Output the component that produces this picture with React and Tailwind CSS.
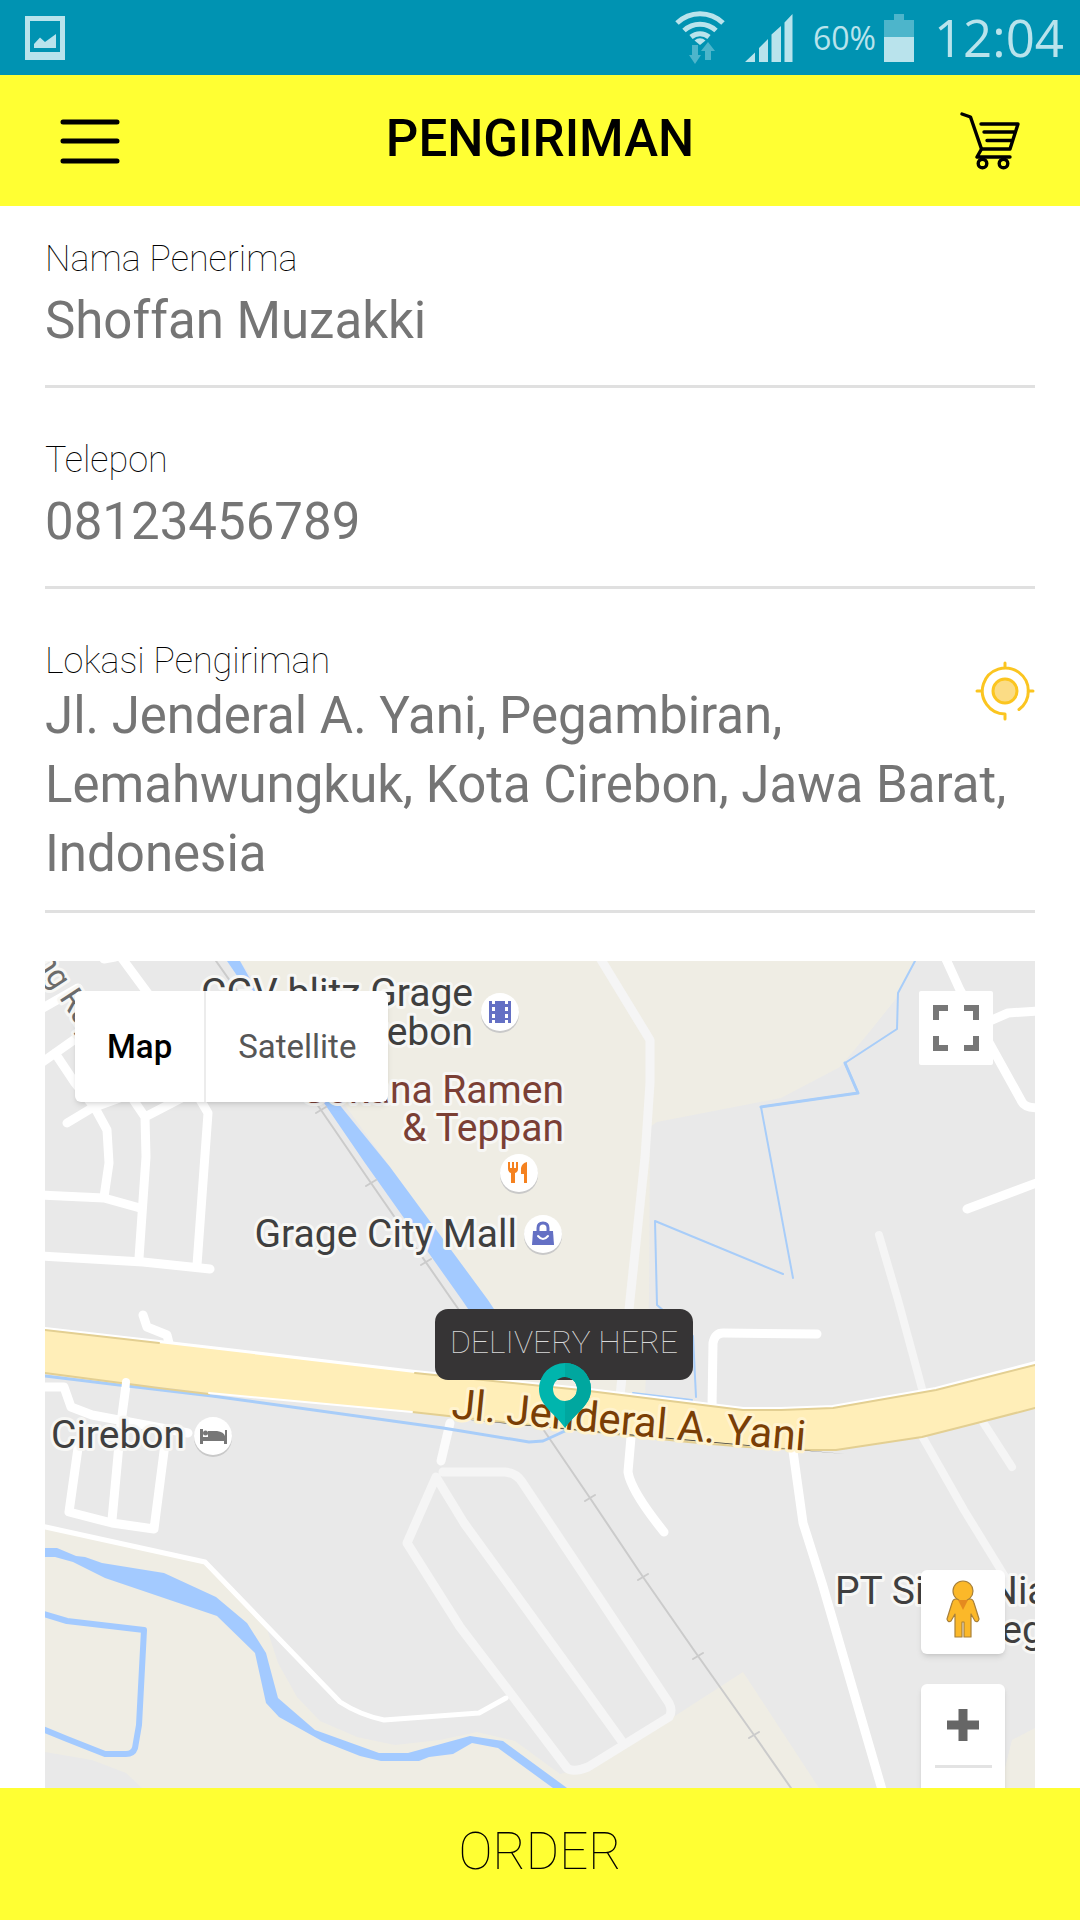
import { useState } from 'react';

const ADDRESS = 'Jl. Jenderal A. Yani, Pegambiran, Lemahwungkuk, Kota Cirebon, Jawa Barat, Indonesia';

// railway sleepers along the track
const TICKS = [[276, 149], [326, 222], [381, 301], [545, 537], [598, 616], [653, 695], [709, 774]];

function StatusBar() {
    return (
        <div className="flex h-[75px] shrink-0 items-center justify-between bg-[#0093b2] pl-[25px] pr-4 text-[#b9e3ec]">
            <svg width="40" height="44" viewBox="0 0 40 44" fill="currentColor">
                <path fillRule="evenodd" d="M0 0H40V44H0ZM5 5V36H35V5Z"/>
                <path d="M9 32V28L15 21.5L20 26L31 18V32Z"/>
            </svg>
            <div className="flex items-center gap-5">
                <svg width="50" height="54" viewBox="0 0 50 54" fill="none" stroke="currentColor" strokeWidth="5">
                    <path d="M2 12A33 33 0 0 1 48 12"/>
                    <path d="M9 19.5A23.5 23.5 0 0 1 41 19.5"/>
                    <path d="M16 26A14 14 0 0 1 34 26"/>
                    <path d="M25 34L19.5 29.5A8 8 0 0 1 30.5 29.5Z" fill="currentColor" stroke="none"/>
                    <path d="M17 34H23V44H26L20 53L14 44H17ZM33 31L40 40H36V49H30V40H26Z" fill="#4db5cb" stroke="none"/>
                </svg>
                <svg width="48" height="48" viewBox="0 0 48 48" fill="currentColor">
                    <path d="M0 48L10 38.5V48ZM14 48V34L23 25V48ZM26.5 48V20.5L36 12V48ZM39.5 48V8.5L47.5 0V48Z"/>
                </svg>
                <div className="flex items-center gap-2">
                    <span className="text-[32px] leading-10">60%</span>
                    <svg width="30" height="48" viewBox="0 0 30 48">
                        <path d="M10 0H20V6H30V23H0V6H10Z" fill="#4db5cb"/>
                        <path d="M0 23H30V48H0Z" fill="currentColor"/>
                    </svg>
                </div>
                <span className="text-[51px] leading-none">12:04</span>
            </div>
        </div>
    );
}

function Header() {
    return (
        <header className="flex h-[131px] shrink-0 items-center justify-between bg-[#ffff33] px-[60px]">
            <button aria-label="Menu">
                <svg width="60" height="60" viewBox="0 0 60 60" stroke="black" strokeWidth="5" strokeLinecap="round">
                    <path d="M3 11H57M3 30H57M3 50H57"/>
                </svg>
            </button>
            <h1 className="pb-1 text-[51px] font-medium leading-[69px] text-black">PENGIRIMAN</h1>
            <button aria-label="Keranjang">
                <svg width="60" height="58" viewBox="0 0 60 58" fill="none" stroke="black" strokeWidth="3.4" strokeLinecap="round" strokeLinejoin="round">
                    <path d="M2 2L10.5 5L21.5 37L17 45H50"/>
                    <path d="M21 12H58L50 37H21.5M24 20H55M27 28.5H52"/>
                    <circle cx="22.5" cy="51.5" r="4.3"/>
                    <circle cx="43.5" cy="51.5" r="4.3"/>
                </svg>
            </button>
        </header>
    );
}

function Field({ id, label, type, value, onChange }) {
    return (
        <div className="flex flex-col border-b-[3px] border-[#e0e0e0] pb-[30px]">
            <label htmlFor={id} className="text-4xl font-thin leading-10 text-black">{label}</label>
            <input id={id} type={type} value={value} onChange={e => onChange(e.target.value)}
                className="mt-[6px] h-[70px] w-full bg-transparent text-[51px] leading-[69px] text-[#757575] outline-none"/>
        </div>
    );
}

function MapCanvas() {
    return (
        <svg className="block h-full w-full" viewBox="0 0 990 827" preserveAspectRatio="xMidYMin slice" fill="none" strokeLinecap="round" strokeLinejoin="round">
            <rect width="990" height="827" fill="#e9e9e9"/>

            {/* land */}
            <g fill="#efede4">
                <path d="M195 0H870L850 39L826 69L795 106L736 137L612 161L605 166L604 339L600 437L470 420L345 206Z"/>
                <path d="M0 566L160 601L222 668L233 702L252 736L275 760L312 776L350 784L395 779L432 771L470 780L515 813L557 802L698 711L774 827H97L81 812L47 799L0 791Z"/>
                <path d="M990 767L967 779L955 827H990Z"/>
            </g>

            {/* water */}
            <g fill="#a3caff">
                <path d="M182 0H195L204 16L293 142L345 206L443 339L480 395H455L417 339L320 202Z"/>
                <path d="M0 587H12L31 595L40 596L57 602L119 612L171 636L202 662L221 692L233 737L270 769L334 792H363L425 775L458 780L522 827H508L453 787L427 782L408 793L384 796L374 800H336L315 795L277 780L234 756L221 742L210 692L172 655L60 617L28 601L10 596H0Z"/>
            </g>
            <path d="M-5 652L22 660L99 669L94 764L90 787Q88 793 81 793H60L22 778L-5 767" stroke="#a3caff" strokeWidth="6"/>
            <g stroke="#a8cdf9" strokeWidth="2">
                <path d="M870 0L853 32L852 68L800 102L813 132L716 146L748 317M738 313L610 260L612 344L648 375L651 436M647 439L588 432"/>
                <path d="M800 102L813 132L716 146" strokeWidth="3"/>
            </g>

            {/* footpaths */}
            <g stroke="#f5f5f5" strokeWidth="9">
                <path d="M555 -3L605 79V122L600 196L585 339L575 435"/>
                <path d="M834 274L853 339L879 435M877 475L919 549L970 632M936 458L967 506" strokeWidth="8"/>
                <path d="M398 511H460Q471 512 477 521L509 569L624 742Q628 750 624 756L543 806Q528 812 522 807L463 729L415 666L362 582L391 516L419 562L535 722L576 779"/>
            </g>

            {/* railway */}
            <path d="M171 0L276 149L326 222L407 339L498 468L545 537L598 616L653 695L709 774L746 827" stroke="#cbcbcb" strokeWidth="2"/>
            {TICKS.map(([x, y]) => <path key={x} d={`M${x - 5} ${y + 3}L${x + 5} ${y - 3}`} stroke="#cbcbcb" strokeWidth="2"/>)}

            {/* streets */}
            <g stroke="white" strokeWidth="9">
                <path d="M76 -4L104 34M59 -2L70 -4M-4 48L33 27M-4 102L33 76M10 92L30 122L50 147L62 169L64 202L59 236M22 162L47 147L80 135M81 128L100 156L101 196L94 297M100 156L150 130L163 152L152 304"/>
                <path d="M-4 234L59 237L95 247M-4 295L98 301L165 308"/>
                <path d="M98 354L102 366L122 374L125 386M-4 426H19L26 446L47 454L143 472M81 424L76 462L67 559M34 480L24 551L67 562L109 568L121 475"/>
                <path d="M900 -4L915 29L977 141Q980 147 994 147M940 62L963 52L994 50M922 248L994 221"/>
                <path d="M586 476L583 511Q586 530 619 571M667 446L668 382Q670 372 678 372L772 373M748 490L758 562L777 622L838 832"/>
                <path d="M405 462L396 500" stroke="#fbfbfb"/>
                <path d="M-4 565L160 601L295 741Q315 754 339 759L434 752L461 737" strokeWidth="5"/>
            </g>

            {/* main road */}
            <path d="M0 415L74 424L167 435L398 467L484 481L498 480L520 470" stroke="#a8cdf9" strokeWidth="3"/>
            <path d="M0 369L114 382L370 412L536 429L698 449H736L788 447L891 429L994 402" stroke="white" strokeWidth="6"/>
            <path d="M0 369L114 382L370 412L536 429L698 449H736L788 447L891 429L990 404V447L932 462L877 476L791 489H764L702 486L643 481L405 456L367 451L164 432L0 412Z" fill="#ffeeb8"/>
            <g stroke="#e3cf92" strokeWidth="2">
                <path d="M0 369L114 382M370 412L536 429L698 449H736L788 447L891 429L990 404"/>
                <path d="M0 412L114 427L164 433M367 451L643 481L702 486L764 489H791L877 476L932 462L990 447"/>
            </g>
            <path d="M164 432L367 451" stroke="white" strokeWidth="2"/>
            <path d="M81 421L80 432" stroke="white" strokeWidth="8"/>

            {/* labels */}
            <g className="text-[39px]" fill="#3f3f3f" stroke="#f7f7f5" strokeWidth="6" style={{ paintOrder: 'stroke' }}>
                <text x="428" y="45" textAnchor="end">CGV blitz Grage</text>
                <text x="428" y="84" textAnchor="end">Cirebon</text>
                <text x="519" y="142" textAnchor="end" fill="#7b3f35">Gokana Ramen</text>
                <text x="519" y="180" textAnchor="end" fill="#7b3f35">&amp; Teppan</text>
                <text x="472" y="286" textAnchor="end">Grage City Mall</text>
                <text x="6" y="487">Cirebon</text>
                <text x="790" y="643">PT Sinar Niaga</text>
                <text x="932" y="682">Pegambiran</text>
                <text className="text-[32px]" fill="#6b6b6b" transform="translate(-10 0) rotate(57)">ng Raya</text>
                <path id="jalan" d="M406 457Q560 473 800 493" stroke="none"/>
                <text className="text-[42px]" fill="#7a3e05" stroke="#fff3cf"><textPath href="#jalan">Jl. Jenderal A. Yani</textPath></text>
            </g>

            {/* places */}
            <g fill="#c9c9c9">
                <circle cx="455" cy="53" r="19"/><circle cx="474" cy="214" r="19"/>
                <circle cx="498" cy="275" r="19"/><circle cx="168" cy="477" r="19"/>
            </g>
            <g fill="white">
                <circle cx="455" cy="51" r="19"/><circle cx="474" cy="212" r="19"/>
                <circle cx="498" cy="273" r="19"/><circle cx="168" cy="475" r="19"/>
            </g>
            <path fill="#6470c4" fillRule="evenodd" d="M444 40H447V43H450V40H460V43H463V40H466V62H463V59H460V62H450V59H447V62H444ZM447 46V50H450V46ZM447 53V57H450V53ZM460 46V50H463V46ZM460 53V57H463V53Z"/>
            <path fill="#f58220" d="M463 201H465V207H467V201H469V207H471V201H473V208Q473 211 470 212V222H466V212Q463 211 463 208ZM482 201V222H479V213H476V207Q477 202 482 201Z"/>
            <path fill="#6470c4" d="M488 270H508L509 284H487Z"/>
            <path d="M493 270V267Q493 262 498 262T503 267V270" stroke="#6470c4" strokeWidth="3"/>
            <path d="M493 275Q498 281 503 275" stroke="white" strokeWidth="2"/>
            <path fill="#777" d="M155 468H158V476H163V470H172Q179 471 180 475V469H182V483H179V480H158V483H155Z"/>
            <circle cx="160.5" cy="472" r="2.5" fill="#777"/>

            {/* delivery marker */}
            <rect x="390" y="348" width="258" height="71" rx="13" fill="#363435"/>
            <text x="519" y="392" textAnchor="middle" className="text-[32px] font-thin" fill="#d8d8d8">DELIVERY HERE</text>
            <path fillRule="evenodd" fill="#00b5ad" d="M520 402A26 26 0 0 1 546 428C546 445 530 452 520 467C510 452 494 445 494 428A26 26 0 0 1 520 402ZM520 416A12 12 0 1 0 520 440A12 12 0 1 0 520 416Z"/>
            <path fill="#00a79f" d="M520 402A26 26 0 0 1 546 428C546 445 530 452 520 467V440A12 12 0 0 0 520 416Z"/>
        </svg>
    );
}

function DeliveryMap() {
    const [mode, setMode] = useState('map');

    return (
        <section aria-label="Peta" className="relative mt-12 min-h-0 flex-1 overflow-hidden bg-[#e9e9e9]">
            <MapCanvas/>
            <div className="absolute left-[30px] top-[30px] flex h-[111px] rounded-md bg-white text-[33px] leading-10 shadow-md">
                <button onClick={() => setMode('map')}
                    className={`border-r-2 border-[#ececec] px-8 ${mode === 'map' ? 'font-medium text-black' : 'text-[#565656]'}`}>Map</button>
                <button onClick={() => setMode('satellite')}
                    className={`px-8 ${mode === 'satellite' ? 'font-medium text-black' : 'text-[#565656]'}`}>Satellite</button>
            </div>
            <button aria-label="Layar penuh" className="absolute right-[42px] top-[30px] flex size-[74px] items-center justify-center rounded-xs bg-white">
                <svg width="46" height="46" viewBox="0 0 46 46" fill="none" stroke="#777" strokeWidth="6">
                    <path d="M3 15V3H15M31 3H43V15M43 31V43H31M15 43H3V31"/>
                </svg>
            </button>
            <div className="absolute right-[30px] top-[609px] flex w-[84px] flex-col gap-[30px]">
                <button aria-label="Street View" className="flex h-[84px] items-start justify-center rounded-md bg-white pt-[10px] shadow-md">
                    <svg width="34" height="58" viewBox="0 0 34 58" fill="#fbb829" stroke="#a8803a" strokeWidth="1.2" strokeLinejoin="round">
                        <path d="M10 19H24Q27 19 28 23L33 39Q32 43 29 41L25 34V57H18V42H16V57H9V34L5 41Q2 43 1 39L6 23Q7 19 10 19Z"/>
                        <circle cx="17" cy="11" r="10"/>
                        <path d="M12 20H22L17 30Z" fill="#e58a1f" stroke="none"/>
                    </svg>
                </button>
                <div className="flex flex-col items-center rounded-md bg-white shadow-md">
                    <button aria-label="Perbesar" className="flex h-[81px] w-full items-center justify-center">
                        <svg width="32" height="32" viewBox="0 0 32 32" stroke="#666" strokeWidth="9"><path d="M16 0V32M0 16H32"/></svg>
                    </button>
                    <div className="h-[3px] w-[57px] bg-[#e3e3e3]"/>
                    <button aria-label="Perkecil" className="flex h-[81px] w-full items-center justify-center">
                        <svg width="32" height="32" viewBox="0 0 32 32" stroke="#666" strokeWidth="9"><path d="M0 16H32"/></svg>
                    </button>
                </div>
            </div>
        </section>
    );
}

export default function App() {
    const [name, setName] = useState('Shoffan Muzakki');
    const [phone, setPhone] = useState('08123456789');
    const [address, setAddress] = useState(ADDRESS);

    return (
        <div className="flex h-screen flex-col bg-white font-['Roboto',sans-serif]">
            <div className="font-['Open_Sans',sans-serif]"><StatusBar/></div>
            <Header/>

            <main className="flex min-h-0 flex-1 flex-col px-[45px] pt-[33px]">
                <div className="flex flex-col gap-[52px]">
                    <Field id="nama" label="Nama Penerima" type="text" value={name} onChange={setName}/>
                    <Field id="telepon" label="Telepon" type="tel" value={phone} onChange={setPhone}/>
                    <div className="relative flex flex-col border-b-[3px] border-[#e0e0e0] pb-[22px]">
                        <label htmlFor="lokasi" className="text-4xl font-thin leading-10 text-black">Lokasi Pengiriman</label>
                        <textarea id="lokasi" rows={3} value={address} onChange={e => setAddress(e.target.value)}
                            className="block w-full resize-none overflow-hidden bg-transparent text-[51px] leading-[69px] text-[#757575] outline-none"/>
                        <button aria-label="Lokasi saya" className="absolute right-0 top-5">
                            <svg width="60" height="60" viewBox="0 0 60 60" fill="none" stroke="#fbc520" strokeWidth="3" strokeLinecap="round" strokeLinejoin="round">
                                <path d="M44 48.5A23 23 0 1 0 30 53V58M30 7V2M7 30H2M53 30H58"/>
                                <circle cx="30" cy="30" r="12" fill="#fbdc85"/>
                            </svg>
                        </button>
                    </div>
                </div>
                <DeliveryMap/>
            </main>

            <button className="h-[132px] shrink-0 bg-[#ffff33] pb-[6px] text-[51px] font-thin leading-[69px] text-black">ORDER</button>
        </div>
    );
}
